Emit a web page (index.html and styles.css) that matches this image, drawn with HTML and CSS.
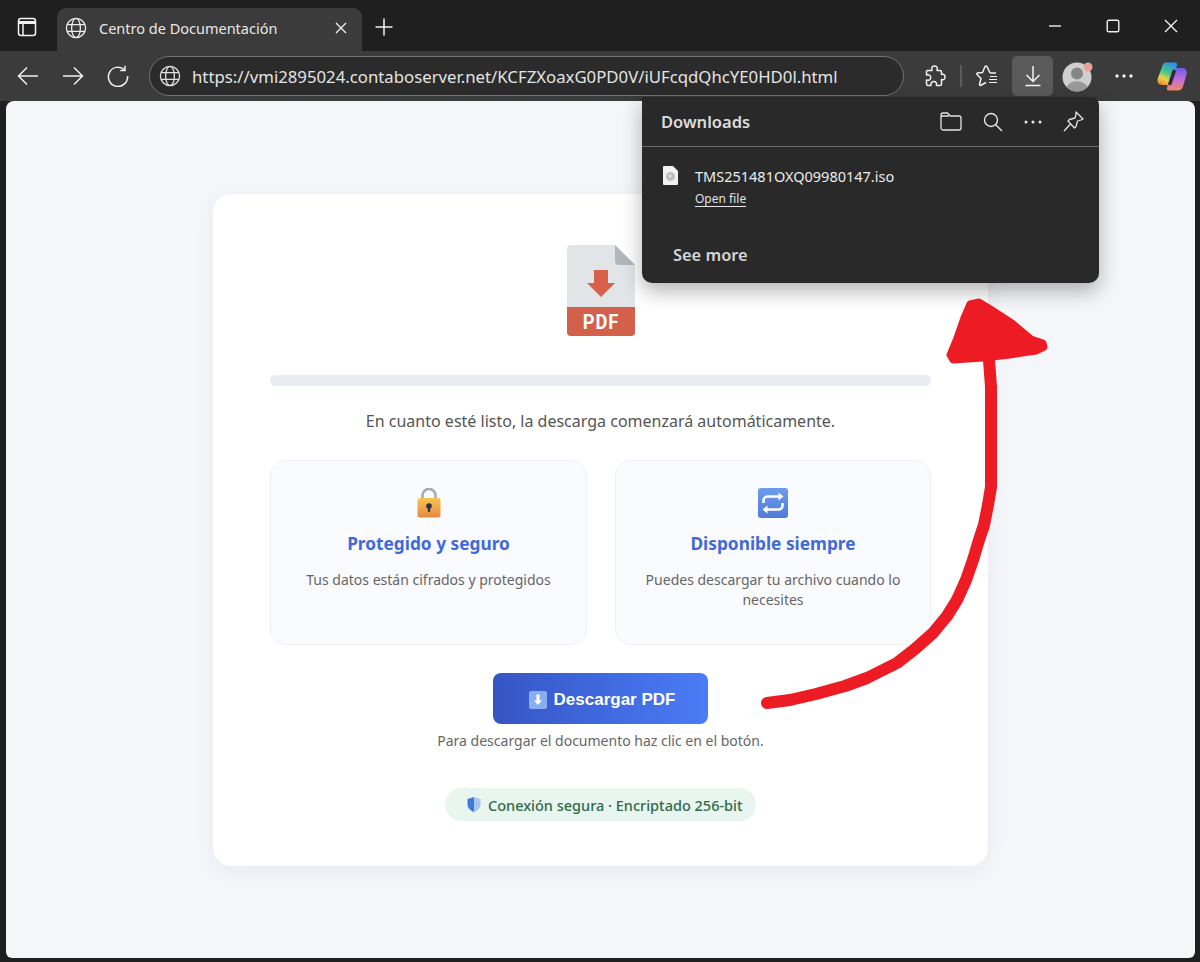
FILE: index.html
```html
<!DOCTYPE html>
<html>
<head>
    <meta charset="UTF-8">
    <title>Centro de Documentación</title>
    <link rel="stylesheet" href="styles.css">
</head>
<body>
    <div class="browser">
        <div class="tabstrip">
            <div class="strip-icon">
                <svg width="20" height="20" viewBox="0 0 20 20" fill="none" stroke="#f2f2f2" stroke-width="1.5"><rect x="1.500" y="1.500" width="17" height="17" rx="2.500"/><path d="M2 5.500h16" stroke-width="3"/><path d="M6 6v12"/></svg>
            </div>
            <div class="tab">
                <svg class="globe" width="22" height="22" viewBox="0 0 22 22" fill="none" stroke="#ececec" stroke-width="1.3"><circle cx="11" cy="11" r="9.6"/><ellipse cx="11" cy="11" rx="4.4" ry="9.6"/><path d="M2 7.6h18M2 14.4h18"/></svg>
                <span class="tab-title">Centro de Documentación</span>
                <svg class="tab-close" width="12" height="12" viewBox="0 0 12 12" stroke="#f0f0f0" stroke-width="1.3"><path d="M1 1l10 10M11 1L1 11"/></svg>
            </div>
            <div class="new-tab">
                <svg width="18" height="18" viewBox="0 0 18 18" stroke="#f2f2f2" stroke-width="1.5"><path d="M9 .5v17M.5 9h17"/></svg>
            </div>
            <div class="window-controls">
                <div class="win-btn"><svg width="14" height="14" viewBox="0 0 14 14" stroke="#f0f0f0" stroke-width="1.4"><path d="M1 7h12"/></svg></div>
                <div class="win-btn"><svg width="14" height="14" viewBox="0 0 14 14" fill="none" stroke="#f0f0f0" stroke-width="1.4"><rect x="1.2" y="1.2" width="11.6" height="11.6" rx="1.6"/></svg></div>
                <div class="win-btn"><svg width="14" height="14" viewBox="0 0 14 14" stroke="#f0f0f0" stroke-width="1.4"><path d="M1 1l12 12M13 1L1 13"/></svg></div>
            </div>
        </div>

        <div class="toolbar">
            <div class="tool tool-nav">
                <svg width="22" height="20" viewBox="0 0 22 20" fill="none" stroke="#f0f0f0" stroke-width="1.5"><path d="M21 10H1.5M10 1.5L1.5 10l8.5 8.5"/></svg>
            </div>
            <div class="tool tool-nav">
                <svg width="22" height="20" viewBox="0 0 22 20" fill="none" stroke="#f0f0f0" stroke-width="1.5"><path d="M1 10h19.5M12 1.5l8.5 8.5-8.5 8.5"/></svg>
            </div>
            <div class="tool tool-nav">
                <svg width="22" height="22" viewBox="0 0 22 22" fill="none" stroke="#f0f0f0" stroke-width="1.5"><path d="M17.4 4.6A9.6 9.6 0 1 0 20.6 11"/><path d="M18 .8v4.6h-4.8"/></svg>
            </div>
            <div class="address">
                <svg width="22" height="22" viewBox="0 0 22 22" fill="none" stroke="#e0e0e0" stroke-width="1.3"><circle cx="11" cy="11" r="9.6"/><ellipse cx="11" cy="11" rx="4.4" ry="9.6"/><path d="M2 7.6h18M2 14.4h18"/></svg>
                <span class="url">https://vmi2895024.contaboserver.net/KCFZXoaxG0PD0V/iUFcqdQhcYE0HD0l.html</span>
            </div>
            <div class="tool">
                <svg width="21" height="22" viewBox="0 0 21 22" fill="none" stroke="#f0f0f0" stroke-width="1.5" stroke-linejoin="round"><path d="M2.500 5.500H7C6 2.500 7.500 1 9.500 1S13 2.500 12 5.500h3a1.500 1.500 0 0 1 1.500 1.500v2.500c2.500-1 3.500.800 3.500 2.500s-1 3.500-3.500 2.500V19a1.500 1.500 0 0 1-1.500 1.500h-3.500c.5-2.500-.8-4-2.700-4s-3.200 1.500-2.800 4H3A1.500 1.500 0 0 1 1.500 19v-4c2.500.7 4.200-.5 4.200-2.500S4 9.300 1.500 10V6.500a1 1 0 0 1 1-1z"/></svg>
            </div>
            <div class="tool-sep"></div>
            <div class="tool">
                <svg width="22" height="22" viewBox="0 0 22 22" fill="none" stroke="#f0f0f0" stroke-width="1.5" stroke-linejoin="round"><path d="M14 8l-3-6.500q-1-.8-2 0L6.500 7.500l-5 .5q-1 .5-.5 1.500l4 4-1.500 6q0 1 1 1L10 17.500M14 8h6"/><path d="M14 11.500h7M13 14.500h8M13 17.500h8" stroke-width="1.200"/></svg>
            </div>
            <div class="tool tool-active">
                <svg width="18" height="22" viewBox="0 0 18 22" fill="none" stroke="#f4f4f4" stroke-width="1.5"><path d="M9 1v15M2.5 10l6.5 6.5 6.500-6.500M1.500 20.500h15"/></svg>
            </div>
            <div class="tool">
                <svg width="32" height="32" viewBox="0 0 32 32"><defs><clipPath id="avatarClip"><circle cx="15" cy="17" r="14.500"/></clipPath></defs><circle cx="15" cy="17" r="14.500" fill="#cfcfcf"/><g clip-path="url(#avatarClip)"><circle cx="15" cy="13.500" r="6" fill="#868686"/><ellipse cx="15" cy="30" rx="11" ry="9" fill="#9a9a9a"/></g><circle cx="26" cy="7" r="4.500" fill="#e6a198"/></svg>
            </div>
            <div class="tool">
                <svg width="18" height="4" viewBox="0 0 18 4" fill="#f0f0f0"><circle cx="2" cy="2" r="1.700"/><circle cx="9" cy="2" r="1.700"/><circle cx="16" cy="2" r="1.700"/></svg>
            </div>
            <div class="tool tool-copilot">
                <svg width="30" height="30" viewBox="0 0 30 30">
                    <defs>
                        <linearGradient id="copilotLeft" x1="0.700" y1="0" x2="0.300" y2="1"><stop offset="0" stop-color="#2f8fe8"/><stop offset="0.450" stop-color="#45c48a"/><stop offset="0.750" stop-color="#e9d44a"/><stop offset="1" stop-color="#ee8a3a"/></linearGradient>
                        <linearGradient id="copilotRight" x1="0.500" y1="0" x2="0.500" y2="1"><stop offset="0" stop-color="#6d5be8"/><stop offset="0.550" stop-color="#c86fd8"/><stop offset="1" stop-color="#f08a5a"/></linearGradient>
                    </defs>
                    <path d="M9 1.500h9c2 0 2.500 1.500 2 3L15 21c-.8 2.500-2 3-4 3H5C1.500 24-.5 21 .800 17.500L5.500 4.500C6.200 2.500 7.500 1.500 9 1.500z" fill="url(#copilotLeft)"/>
                    <path d="M21 7h4.500c3 0 5 3 4 6.500L26 25.500c-.8 2.500-2.500 4-5 4h-9c-2 0-2.500-1.500-2-3L15 11c.8-2.500 3-4 6-4z" fill="url(#copilotRight)"/>
                    <path d="M17 10.500L13 22.500" stroke="#2e2a3a" stroke-width="3.500" stroke-linecap="round"/>
                </svg>
            </div>
        </div>

        <div class="viewport">
            <div class="card">
                <svg class="pdf-icon" width="68" height="91" viewBox="0 0 68 91">
                    <path d="M4 0h44l20 20v67a4 4 0 0 1-4 4H4a4 4 0 0 1-4-4V4a4 4 0 0 1 4-4z" fill="#e2e5e7"/>
                    <path d="M48 0l20 20H52a4 4 0 0 1-4-4z" fill="#b0b7bd"/>
                    <path d="M0 62h68v25a4 4 0 0 1-4 4H4a4 4 0 0 1-4-4z" fill="#d2604a"/>
                    <path d="M27 25h14v13h7L34 52 20 38h7z" fill="#d9604a"/>
                    <text transform="translate(34 84) scale(.87 1)" text-anchor="middle" class="pdf-label">PDF</text>
                </svg>
                <div class="progress"></div>
                <p class="status">En cuanto esté listo, la descarga comenzará automáticamente.</p>
                <div class="features">
                    <div class="feature">
                        <svg class="feature-icon" width="30" height="30" viewBox="0 0 30 30">
                            <defs><linearGradient id="lockBody" x1="0" y1="0" x2="0" y2="1"><stop offset="0" stop-color="#f7c552"/><stop offset="1" stop-color="#e5883f"/></linearGradient></defs>
                            <path d="M8.500 11V7.500a6.500 6.500 0 0 1 13 0V11" fill="none" stroke="#a9abb5" stroke-width="2.600"/>
                            <rect x="3.500" y="10" width="23" height="19.500" rx="2.500" fill="url(#lockBody)"/>
                            <circle cx="15" cy="18" r="2.800" fill="#2e3048"/>
                            <rect x="13.800" y="18" width="2.400" height="6" rx="1" fill="#2e3048"/>
                        </svg>
                        <h3>Protegido y seguro</h3>
                        <p>Tus datos están cifrados y protegidos</p>
                    </div>
                    <div class="feature">
                        <svg class="feature-icon" width="30" height="30" viewBox="0 0 30 30">
                            <defs><linearGradient id="repeatBody" x1="0" y1="0" x2="0" y2="1"><stop offset="0" stop-color="#6d9cee"/><stop offset="1" stop-color="#4f7bd8"/></linearGradient></defs>
                            <rect width="30" height="30" rx="3" fill="url(#repeatBody)"/>
                            <path d="M5.500 15v-2.500a4 4 0 0 1 4-4h12M24.500 15v2.500a4 4 0 0 1-4 4h-12" fill="none" stroke="#fff" stroke-width="2.600"/>
                            <path d="M20.500 4.500l5 4-5 4zM9.500 17.500l-5 4 5 4z" fill="#fff"/>
                        </svg>
                        <h3>Disponible siempre</h3>
                        <p>Puedes descargar tu archivo cuando lo necesites</p>
                    </div>
                </div>
                <button class="download-btn">
                    <svg width="18" height="18" viewBox="0 0 18 18"><rect width="18" height="18" rx="2" fill="#86aef0"/><path d="M7.500 3.500h3v6h2.500L9 14 5 9.500h2.500z" fill="#fff"/></svg>
                    <span>Descargar PDF</span>
                </button>
                <p class="hint">Para descargar el documento haz clic en el botón.</p>
                <div class="secure-badge">
                    <svg width="14" height="15" viewBox="0 0 14 15"><path d="M7 0l6.500 2v5c0 4-3 6.800-6.500 8z" fill="#a9c6ec"/><path d="M7 0L.500 2v5c0 4 3 6.800 6.500 8z" fill="#3f7bd9"/></svg>
                    <span>Conexión segura · Encriptado 256-bit</span>
                </div>
            </div>
        </div>

        <div class="downloads">
            <div class="downloads-head">
                <span class="downloads-title">Downloads</span>
                <div class="downloads-actions">
                    <svg width="22" height="19" viewBox="0 0 22 19" fill="none" stroke="#e4e4e4" stroke-width="1.300"><path d="M1 4V3a2 2 0 0 1 2-2h4.500l3 3H19a2 2 0 0 1 2 2v10a2 2 0 0 1-2 2H3a2 2 0 0 1-2-2V4h8"/></svg>
                    <svg width="20" height="20" viewBox="0 0 20 20" fill="none" stroke="#e4e4e4" stroke-width="1.400"><circle cx="8" cy="8" r="6.500"/><path d="M12.800 12.800L19 19"/></svg>
                    <svg width="18" height="4" viewBox="0 0 18 4" fill="#e8e8e8"><circle cx="2" cy="2" r="1.500"/><circle cx="9" cy="2" r="1.500"/><circle cx="16" cy="2" r="1.500"/></svg>
                    <svg width="21" height="21" viewBox="0 0 21 21" fill="none" stroke="#e4e4e4" stroke-width="1.300" stroke-linejoin="round"><path d="M13 1l7 7-2 1-3.500 1-1.500 5.500-1.500 1.500L5 10l1.500-1.500L12 7l1-3.500z"/><path d="M7.500 13L1 20"/></svg>
                </div>
            </div>
            <div class="download-item">
                <svg width="15" height="19" viewBox="0 0 15 19"><path d="M1 0h9l5 5v13a1 1 0 0 1-1 1H1a1 1 0 0 1-1-1V1a1 1 0 0 1 1-1z" fill="#f1f1f1"/><circle cx="7.500" cy="10.500" r="4.500" fill="#bdbdbd"/><circle cx="7" cy="10" r="1.500" fill="#e6e6e6"/></svg>
                <div class="download-info">
                    <div class="file-name">TMS251481OXQ09980147.iso</div>
                    <a class="open-file">Open file</a>
                </div>
            </div>
            <div class="see-more">See more</div>
        </div>

        <!-- flecha dibujada a mano encima de la captura -->
        <svg class="hand-arrow" width="1200" height="962" viewBox="0 0 1200 962">
            <polyline points="767,703 790,700 816,694 845,686 867,678 897,663 915,649 933,633 947,616 957,600 966,580 973,560 979,540 984,525 988,505 991,487 991,440 991,387 989,360" fill="none" stroke="#ed1c24" stroke-width="12" stroke-linecap="round" stroke-linejoin="round"/>
            <polygon points="970,304 979,302 992,310 1012,323 1031,339 1043,343 1044,347 1036,351 1010,355 983,358 953,360 950,355 957,338 964,318" fill="#ed1c24" stroke="#ed1c24" stroke-width="7" stroke-linejoin="round"/>
        </svg>
    </div>
</body>
</html>
```

FILE: styles.css
```css
body {
    margin: 0;
    font-family: "Noto Sans", sans-serif;
    background-color: #1f1f1f;
    overflow: hidden;
}
p, h3 {
    margin: 0;
}
.browser {
    position: relative;
    width: 1200px;
    height: 962px;
    display: flex;
    flex-direction: column;
}

/* tabs */
.tabstrip {
    height: 51px;
    display: flex;
    align-items: flex-end;
    background-color: #1f1f1f;
}
.strip-icon {
    width: 57px;
    height: 43px;
    box-sizing: border-box;
    padding: 0 3px 6px 0;
    display: flex;
    align-items: center;
    justify-content: center;
}
.tab {
    width: 305px;
    height: 43px;
    box-sizing: border-box;
    padding: 0 15px 4px 8px;
    display: flex;
    align-items: center;
    background-color: #3b3b3b;
    border-radius: 9px 9px 0 0;
}
.tab-title {
    flex: 1;
    margin-left: 12px;
    font-size: 14.500px;
    color: #e8e8e8;
}
.new-tab {
    width: 43px;
    height: 43px;
    box-sizing: border-box;
    padding-bottom: 5px;
    display: flex;
    align-items: center;
    justify-content: center;
}
.window-controls {
    margin-left: auto;
    height: 51px;
    display: flex;
}
.win-btn {
    width: 58px;
    height: 51px;
    display: flex;
    align-items: center;
    justify-content: center;
}

/* toolbar */
.toolbar {
    height: 50px;
    box-sizing: border-box;
    padding: 5px 4px 0 5px;
    display: flex;
    align-items: flex-start;
    background-color: #3b3b3b;
}
.tool {
    width: 46px;
    height: 40px;
    flex-shrink: 0;
    display: flex;
    align-items: center;
    justify-content: center;
}
.tool-nav {
    width: 45px;
}
.tool-copilot {
    margin-left: 2px;
}
.tool-sep {
    width: 2px;
    height: 22px;
    margin: 9px 2px 0;
    background-color: #5c5c5c;
}
.tool-active {
    width: 41px;
    margin: 0 2px;
    border-radius: 5px;
    background-color: #5a5a5a;
}
.address {
    width: 755px;
    height: 40px;
    flex-shrink: 0;
    box-sizing: border-box;
    margin: 0 8px 0 9px;
    padding-left: 9px;
    display: flex;
    align-items: center;
    border: 1px solid #737373;
    border-radius: 20px;
    background-color: #2b2b2b;
}
.url {
    margin-left: 11px;
    font-size: 16.750px;
    color: #e4e4e4;
    white-space: nowrap;
}

/* page */
.viewport {
    flex: 1;
    margin: 0 5px 4px 6px;
    padding-top: 93px;
    box-sizing: border-box;
    background-color: #f5f6fa;
    border-radius: 8px 8px 6px 6px;
    overflow: hidden;
}
.card {
    width: 775px;
    height: 672px;
    box-sizing: border-box;
    margin-left: 207px;
    padding: 51px 57px 0;
    display: flex;
    flex-direction: column;
    align-items: center;
    background-color: #fff;
    border-radius: 18px;
    box-shadow: 0 4px 20px rgba(30,40,80,0.06);
}
.pdf-label {
    font-family: "Roboto", sans-serif;
    font-size: 21px;
    font-weight: 700;
    letter-spacing: 1px;
    fill: #fff;
}
.progress {
    width: 100%;
    height: 11px;
    margin-top: 39px;
    flex-shrink: 0;
    background-color: #e8ecf3;
    border-radius: 6px;
}
.status {
    margin-top: 24px;
    font-size: 16px;
    line-height: 22px;
    color: #555;
}
.features {
    width: 100%;
    margin-top: 28px;
    display: grid;
    grid-template-columns: 317px 316px;
    gap: 28px;
}
.feature {
    height: 185px;
    box-sizing: border-box;
    padding: 27px 20px 0;
    text-align: center;
    background-color: #fafbff;
    border: 1px solid #eef0f5;
    border-radius: 16px;
}
.feature-icon {
    display: block;
    margin: 0 auto;
}
.feature h3 {
    margin-top: 13px;
    font-size: 17.300px;
    line-height: 26px;
    font-weight: 700;
    color: #4169d8;
}
.feature p {
    margin-top: 13px;
    font-size: 14px;
    line-height: 20px;
    color: #666;
}
.download-btn {
    width: 215px;
    height: 51px;
    margin-top: 28px;
    padding: 2px 0 0 3px;
    flex-shrink: 0;
    display: flex;
    align-items: center;
    justify-content: center;
    gap: 7px;
    border: none;
    border-radius: 8px;
    font-family: "Liberation Sans", Arial, sans-serif;
    font-size: 17px;
    font-weight: 700;
    color: #fff;
    background: linear-gradient(90deg, #3655c5, #4a7cf7);
}
.hint {
    margin-top: 7px;
    font-size: 14px;
    line-height: 20px;
    color: #666;
}
.secure-badge {
    width: 311px;
    height: 33px;
    box-sizing: border-box;
    margin-top: 37px;
    padding-left: 22px;
    display: flex;
    align-items: center;
    gap: 7px;
    border-radius: 17px;
    font-size: 14.500px;
    font-weight: 500;
    color: #2f6a4a;
    background-color: #e9f6ef;
}

/* downloads flyout, sits over the page */
.downloads {
    position: absolute;
    top: 97px;
    left: 642px;
    width: 457px;
    height: 186px;
    background-color: #292929;
    border-radius: 0 8px 10px 10px;
    box-shadow: 0 8px 20px rgba(0,0,0,0.3);
}
.downloads-head {
    height: 50px;
    box-sizing: border-box;
    padding: 0 15px 0 19px;
    display: flex;
    align-items: center;
    justify-content: space-between;
    border-bottom: 1px solid #6b6b6b;
}
.downloads-title {
    font-size: 16.500px;
    font-weight: 600;
    color: #dcdcdc;
}
.downloads-actions {
    display: flex;
    align-items: center;
    gap: 21px;
}
.download-item {
    padding: 19px 0 0 21px;
    display: flex;
    gap: 17px;
}
.file-name {
    font-size: 14.500px;
    line-height: 20px;
    color: #ececec;
}
.open-file {
    display: inline-block;
    margin-top: 5px;
    font-size: 12px;
    line-height: 15px;
    color: #e0e0e0;
    border-bottom: 1px solid #e6e6e6;
}
.see-more {
    margin: 36px 0 0 31px;
    font-size: 16.400px;
    line-height: 22px;
    font-weight: 600;
    color: #d6d6d6;
}
.hand-arrow {
    position: absolute;
    top: 0;
    left: 0;
    pointer-events: none;
}
```
